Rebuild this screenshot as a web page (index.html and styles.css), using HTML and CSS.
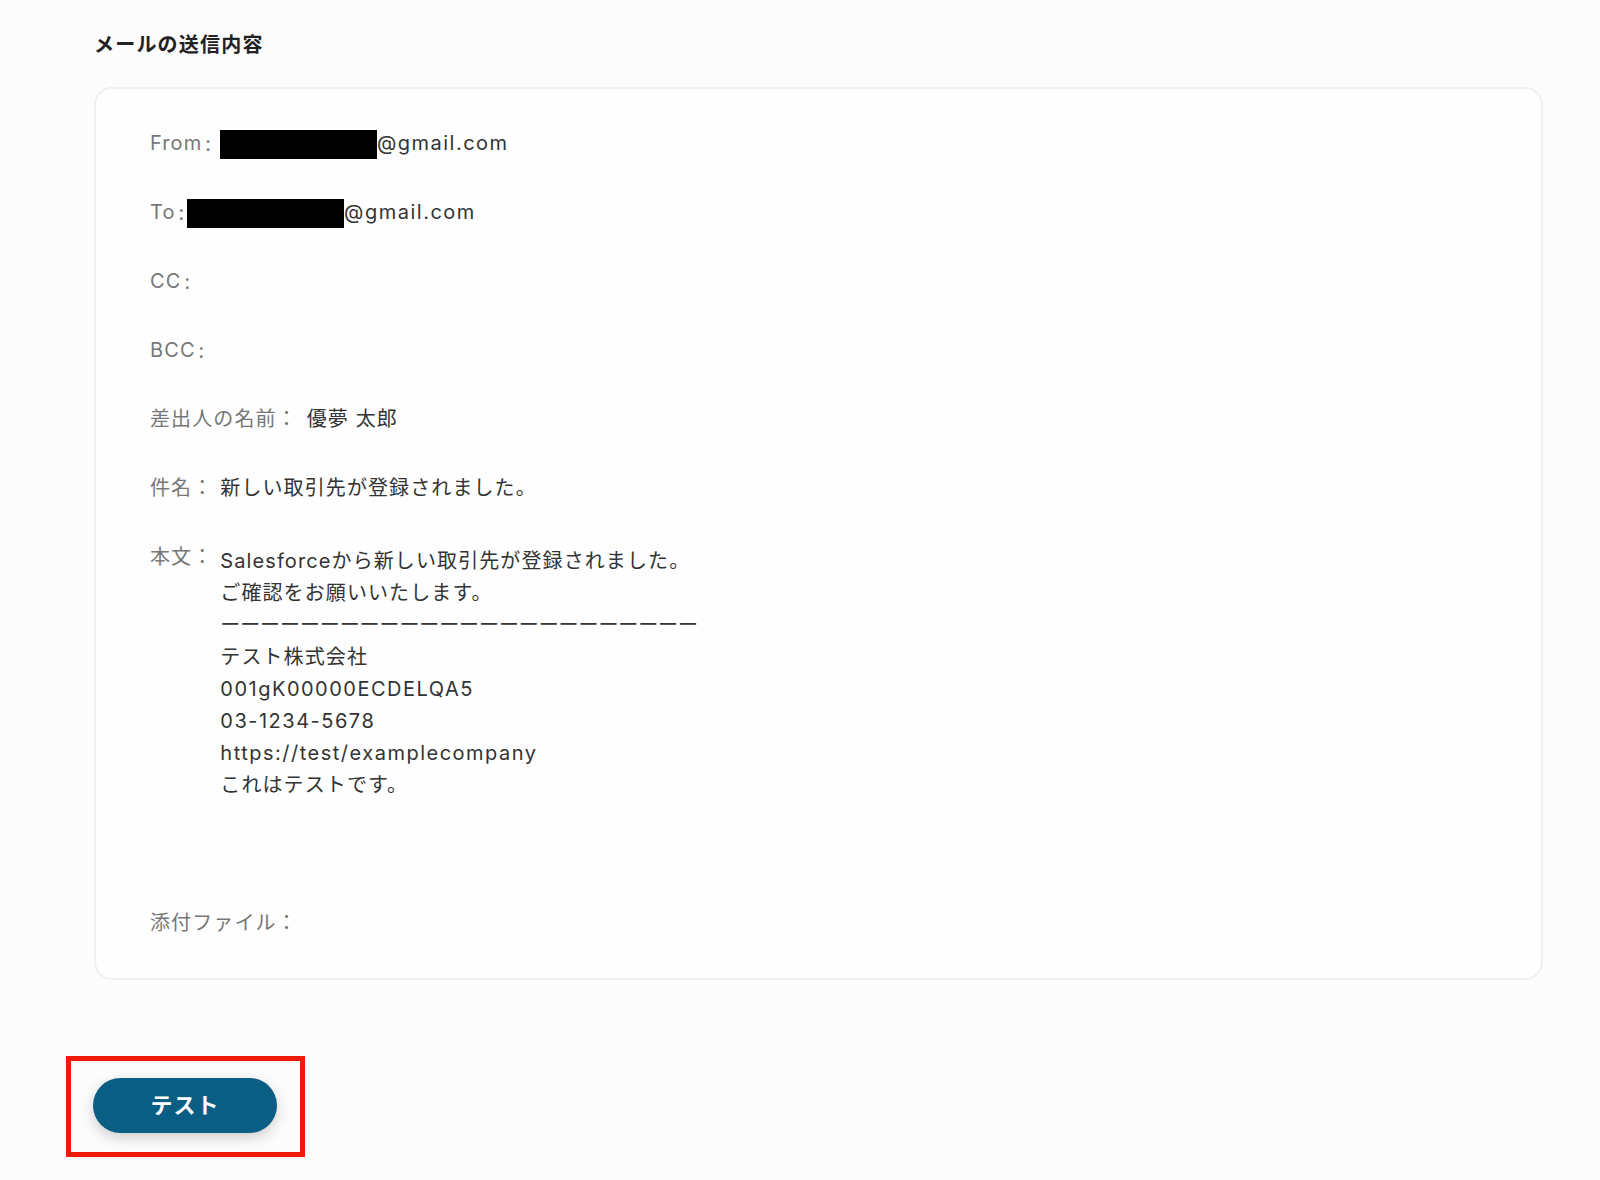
FILE: index.html
```html
<!DOCTYPE html>
<html lang="ja">
<head>
<meta charset="utf-8">
<link rel="stylesheet" href="styles.css">
</head>
<body>
<main class="page">
  <h2 class="title">メールの送信内容</h2>
  <section class="card">
    <div class="row"><span class="label">From<span class="colon">:</span></span><span class="redact redact-from"></span><span class="val latin">@gmail.com</span></div>
    <div class="row"><span class="label">To<span class="colon">:</span></span><span class="redact redact-to"></span><span class="val latin">@gmail.com</span></div>
    <div class="row"><span class="label">CC<span class="colon">:</span></span></div>
    <div class="row"><span class="label">BCC<span class="colon">:</span></span></div>
    <div class="row"><span class="label">差出人の名前：</span><span class="val gap-wide">優夢 太郎</span></div>
    <div class="row"><span class="label">件名：</span><span class="val gap">新しい取引先が登録されました。</span></div>
    <div class="row row-body"><span class="label">本文：</span>
      <div class="val gap body-text">
        <div>Salesforceから新しい取引先が登録されました。</div>
        <div>ご確認をお願いいたします。</div>
        <div class="dashes">ーーーーーーーーーーーーーーーーーーーーーーーー</div>
        <div>テスト株式会社</div>
        <div class="latin">001gK00000ECDELQA5</div>
        <div class="latin">03-1234-5678</div>
        <div class="latin">https://test/examplecompany</div>
        <div>これはテストです。</div>
      </div>
    </div>
    <div class="row row-attach"><span class="label">添付ファイル：</span></div>
  </section>
  <div class="highlight">
    <button class="btn" type="button">テスト</button>
  </div>
</main>
</body>
</html>
```
FILE: styles.css
```css
html, body {
  margin: 0;
  padding: 0;
  background: #fcfcfd;
}
body {
  font-family: Inter, "Noto Sans CJK JP", sans-serif;
  color: #333;
}
.page {
  padding: 30px 57px 0 94px;
}
.title {
  margin: 0;
  font-family: "Noto Sans CJK JP", sans-serif;
  font-size: 20px;
  line-height: 28px;
  font-weight: 700;
  letter-spacing: 1.2px;
  color: #222;
}
.card {
  margin-top: 29px;
  height: 893px;
  box-sizing: border-box;
  border: 2px solid #f0f0f3;
  border-radius: 18px;
  background: #fefefe;
  padding: 38px 54px 0;
  display: flex;
  flex-direction: column;
  gap: 37px;
}
.row {
  display: flex;
  align-items: center;
  font-size: 20px;
  line-height: 32px;
  letter-spacing: 1.1px;
  height: 32px;
}
.label {
  color: #777;
  display: inline-flex;
  align-items: center;
}
.colon {
  display: inline-block;
  font-family: "Noto Sans CJK JP", sans-serif;
  margin: 0 6px 0 3px;
  letter-spacing: 0;
}
.val {
  color: #333;
}
.latin {
  letter-spacing: 1.5px;
}
.redact {
  display: inline-block;
  height: 29px;
  background: #000;
  margin-top: 2px;
}
.redact-from { width: 157px; margin-left: 3px; }
.redact-to { width: 157px; margin-left: -3px; }
.gap { margin-left: 7px; }
.gap-wide { margin-left: 9px; }
.row-body {
  align-items: flex-start;
  height: auto;
}
.body-text {
  line-height: 32px;
  margin-top: 4px;
}
.dashes {
  letter-spacing: -0.1px;
  white-space: nowrap;
}
.row-attach {
  margin-top: 69px;
}
.highlight {
  display: inline-block;
  margin: 76px 0 0 -28px;
  border: 5px solid #f01a0a;
  padding: 17px 23px 19px 22px;
}
.btn {
  display: block;
  width: 184px;
  height: 55px;
  padding: 0 0 5px;
  border: none;
  border-radius: 28px;
  background: #0a5e83;
  color: #fff;
  font-family: "Noto Sans CJK JP", sans-serif;
  font-size: 22px;
  line-height: 1;
  font-weight: 700;
  letter-spacing: 1px;
  box-shadow: 0 5px 14px rgba(0, 0, 0, 0.18);
}
```
